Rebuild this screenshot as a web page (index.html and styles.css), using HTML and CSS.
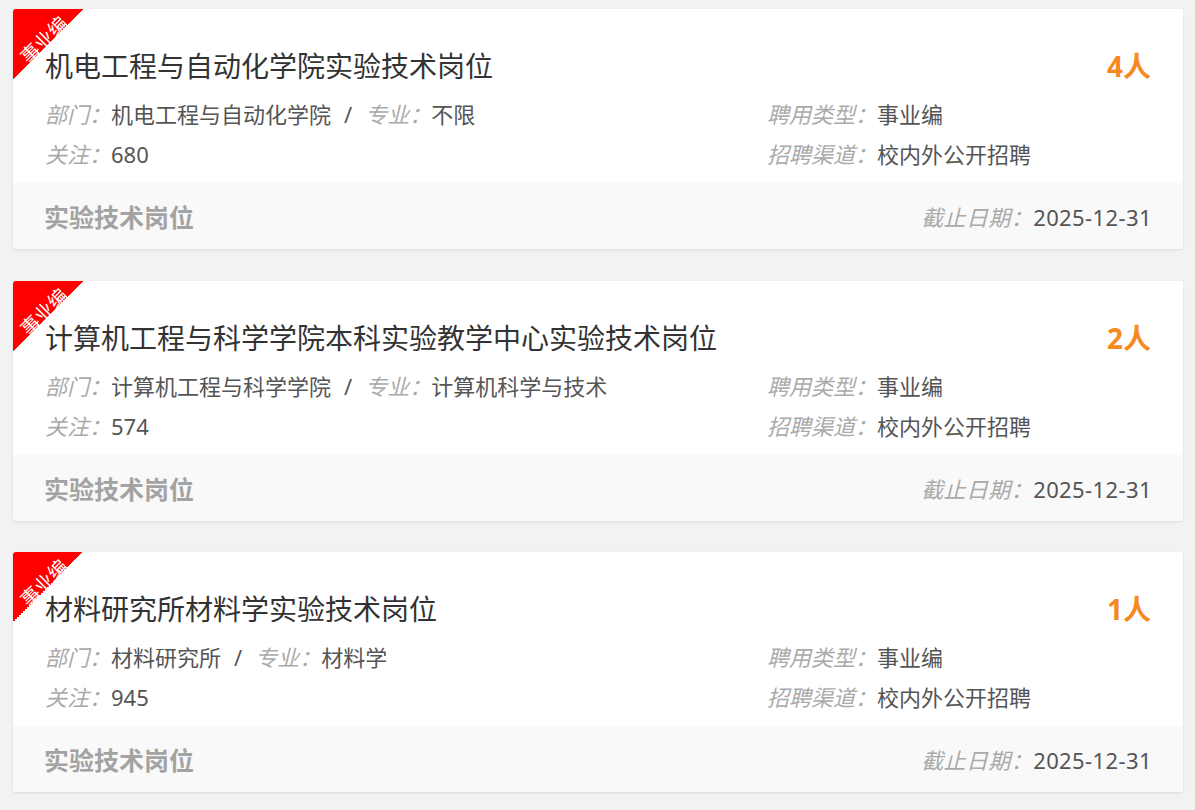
FILE: index.html
```html
<!DOCTYPE html>
<html lang="zh-CN">
<head>
    <meta charset="UTF-8">
    <meta name="viewport" content="width=device-width, initial-scale=1.0">
    <title>招聘岗位</title>
    <link rel="stylesheet" href="styles.css">
</head>
<body>
    <div class="job-list">
        <!-- 岗位 1 -->
        <div class="job-card">
            <div class="ribbon"><span>事业编</span></div>
            <div class="job-body">
                <div class="job-head">
                    <div class="job-title">机电工程与自动化学院实验技术岗位</div>
                    <div class="job-count">4人</div>
                </div>
                <div class="job-info">
                    <div class="info-item"><span class="lbl">部门：</span>机电工程与自动化学院<span class="sep">/</span><span class="lbl">专业：</span>不限</div>
                    <div class="info-item"><span class="lbl">聘用类型：</span>事业编</div>
                    <div class="info-item"><span class="lbl">关注：</span>680</div>
                    <div class="info-item"><span class="lbl">招聘渠道：</span>校内外公开招聘</div>
                </div>
            </div>
            <div class="job-foot">
                <div class="job-type">实验技术岗位</div>
                <div class="job-date"><span class="lbl">截止日期：</span>2025-12-31</div>
            </div>
        </div>

        <!-- 岗位 2 -->
        <div class="job-card">
            <div class="ribbon"><span>事业编</span></div>
            <div class="job-body">
                <div class="job-head">
                    <div class="job-title">计算机工程与科学学院本科实验教学中心实验技术岗位</div>
                    <div class="job-count">2人</div>
                </div>
                <div class="job-info">
                    <div class="info-item"><span class="lbl">部门：</span>计算机工程与科学学院<span class="sep">/</span><span class="lbl">专业：</span>计算机科学与技术</div>
                    <div class="info-item"><span class="lbl">聘用类型：</span>事业编</div>
                    <div class="info-item"><span class="lbl">关注：</span>574</div>
                    <div class="info-item"><span class="lbl">招聘渠道：</span>校内外公开招聘</div>
                </div>
            </div>
            <div class="job-foot">
                <div class="job-type">实验技术岗位</div>
                <div class="job-date"><span class="lbl">截止日期：</span>2025-12-31</div>
            </div>
        </div>

        <!-- 岗位 3 -->
        <div class="job-card">
            <div class="ribbon"><span>事业编</span></div>
            <div class="job-body">
                <div class="job-head">
                    <div class="job-title">材料研究所材料学实验技术岗位</div>
                    <div class="job-count">1人</div>
                </div>
                <div class="job-info">
                    <div class="info-item"><span class="lbl">部门：</span>材料研究所<span class="sep">/</span><span class="lbl">专业：</span>材料学</div>
                    <div class="info-item"><span class="lbl">聘用类型：</span>事业编</div>
                    <div class="info-item"><span class="lbl">关注：</span>945</div>
                    <div class="info-item"><span class="lbl">招聘渠道：</span>校内外公开招聘</div>
                </div>
            </div>
            <div class="job-foot">
                <div class="job-type">实验技术岗位</div>
                <div class="job-date"><span class="lbl">截止日期：</span>2025-12-31</div>
            </div>
        </div>
    </div>
</body>
</html>
```

FILE: styles.css
```css
body {
    margin: 0;
    background-color: #f2f2f2;
    font-family: "Noto Sans", "Noto Sans CJK SC", sans-serif;
    color: #333;
}
.job-list {
    display: flex;
    flex-direction: column;
    gap: 31.5px;
    padding: 9px 12px 20px 13px;
}
.job-card {
    position: relative;
    background-color: #fff;
    border-radius: 3px;
    box-shadow: 0 1px 3px rgba(0, 0, 0, 0.1);
    overflow: hidden;
}
/* corner ribbon */
.ribbon {
    position: absolute;
    top: 0;
    left: 0;
    width: 70px;
    height: 70px;
    background: linear-gradient(135deg, #ff0000 50%, transparent 50%);
    overflow: hidden;
}
.ribbon span {
    position: absolute;
    left: -19px;
    top: 21px;
    width: 100px;
    line-height: 20px;
    text-align: center;
    font-size: 19px;
    color: #fff;
    transform: rotate(-45deg);
}
.job-body {
    padding: 36px 32px 9px;
}
.job-head {
    display: flex;
    justify-content: space-between;
    align-items: center;
    height: 40px;
}
.job-title {
    font-size: 28px;
    color: #333;
}
.job-count {
    font-size: 28px;
    font-weight: bold;
    color: #f7891e;
}
.job-info {
    display: grid;
    grid-template-columns: 1fr 384px;
    margin-top: 9px;
}
.info-item {
    font-size: 22px;
    line-height: 40px;
    color: #555;
    white-space: nowrap;
}
.lbl {
    font-style: italic;
    color: #aaa;
}
.sep {
    margin: 0 13px;
    color: #555;
}
.job-foot {
    display: flex;
    justify-content: space-between;
    align-items: center;
    height: 66px;
    padding: 0 31px;
    background-color: #f9f9f9;
}
.job-type {
    font-size: 25px;
    font-weight: bold;
    color: #a3a3a3;
}
.job-date {
    font-size: 22px;
    color: #555;
    letter-spacing: 0.4px;
}
```
